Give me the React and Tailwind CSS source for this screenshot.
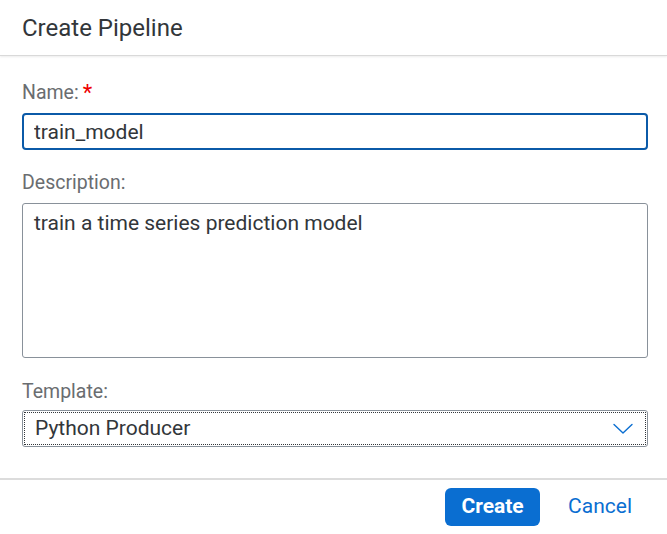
import React, { useState } from 'react';

function Label({ children, required }) {
  return (
    <div className="h-6 leading-6 text-[19.5px] text-[#6a6d70] flex items-center">
      {children}
      {required && <span className="ml-1 text-[#e00] text-[22px] leading-6">*</span>}
    </div>
  );
}

export default function App() {
  const [name, setName] = useState('train_model');
  const [description, setDescription] = useState('train a time series prediction model');

  return (
    <div className="w-[667px] h-[534px] bg-white flex flex-col overflow-hidden" style={{ fontFamily: 'Roboto, "Liberation Sans", sans-serif' }}>
      {/* Header */}
      <div className="h-[56px] shrink-0 flex items-center px-[22px] border-b border-[#d9d9d9] shadow-[0_1px_2px_rgba(0,0,0,0.08)]">
        <h1 className="text-[24px] text-[#32363a] font-normal">Create Pipeline</h1>
      </div>

      {/* Form */}
      <div className="flex-1 pt-[25px] pl-[22px] pr-[19px] flex flex-col">
        <Label required>Name:</Label>
        <input
          value={name}
          onChange={(e) => setName(e.target.value)}
          className="mt-[8px] h-[37px] border-2 border-[#0b5aa8] rounded-[4px] px-[10px] text-[21px] text-[#32363a] outline-none"
        />

        <div className="mt-[21px]">
          <Label>Description:</Label>
        </div>
        <textarea
          value={description}
          onChange={(e) => setDescription(e.target.value)}
          className="mt-[8px] h-[155px] border border-[#89919a] rounded-[3px] px-[11px] py-[4px] text-[21px] text-[#32363a] resize-none outline-none"
        />

        <div className="mt-[22px]">
          <Label>Template:</Label>
        </div>
        <div className="mt-[6px] h-[37px] border border-[#89919a] rounded-[3px] p-[1px]">
          <div className="h-full border border-dotted border-[#32363a] flex items-center justify-between pl-[10px] pr-[12px]">
            <span className="text-[21px] text-[#32363a]">Python Producer</span>
            <svg width="20" height="12" viewBox="0 0 20 12" fill="none">
              <path d="M1 1.5 L10 10 L19 1.5" stroke="#0a6ed1" strokeWidth="1.4" strokeLinecap="round" strokeLinejoin="round" />
            </svg>
          </div>
        </div>
      </div>

      {/* Footer */}
      <div className="h-[56px] shrink-0 border-t-2 border-[#dcdcdc] flex items-center justify-end pr-[25px] gap-[18px]">
        <button className="h-[38px] w-[95px] rounded-[6px] bg-[#0a6ed1] text-white text-[21px] font-bold">
          Create
        </button>
        <button className="h-[38px] px-[10px] text-[21px] text-[#0a6ed1]">
          Cancel
        </button>
      </div>
    </div>
  );
}
